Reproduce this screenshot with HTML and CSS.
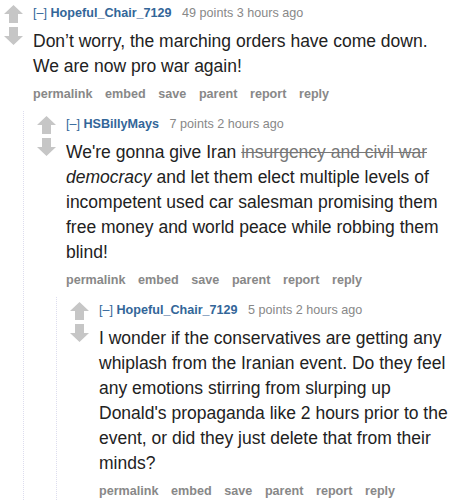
FILE: index.html
```html
<!DOCTYPE html>
<html lang="en">

<head>
  <meta charset="UTF-8">
  <meta name="viewport" content="width=device-width, initial-scale=1.0">
  <title>comments</title>
  <link rel="stylesheet" href="styles.css">
</head>

<body>

  <div class="comment">
    <div class="midcol">
      <svg class="arrows" width="19" height="48" viewBox="0 0 19 48">
        <polygon points="9.5,6 19,15 14,15 14,24 5,24 5,15 0,15" />
        <polygon points="5,28 14,28 14,37 19,37 9.5,46 0,37 5,37" />
      </svg>
    </div>
    <div class="entry">
      <p class="tagline">
        <a class="expand">[–]</a>
        <a class="author">Hopeful_Chair_7129</a>
        <span class="score">49 points</span> <span>3 hours ago</span>
      </p>
      <div class="md">
        <p>Don’t worry, the marching orders have come down. We are now pro war again!</p>
      </div>
      <ul class="buttons">
        <li>permalink</li>
        <li>embed</li>
        <li>save</li>
        <li>parent</li>
        <li>report</li>
        <li>reply</li>
      </ul>
    </div>
  </div>

  <div class="child">
    <div class="comment">
      <div class="midcol">
        <svg class="arrows" width="19" height="48" viewBox="0 0 19 48">
          <polygon points="9.5,6 19,15 14,15 14,24 5,24 5,15 0,15" />
          <polygon points="5,28 14,28 14,37 19,37 9.5,46 0,37 5,37" />
        </svg>
      </div>
      <div class="entry">
        <p class="tagline">
          <a class="expand">[–]</a>
          <a class="author">HSBillyMays</a>
          <span class="score">7 points</span> <span>2 hours ago</span>
        </p>
        <div class="md">
          <p>We're gonna give Iran <del>insurgency and civil war</del> <em>democracy</em> and let them elect multiple levels of incompetent used car salesman promising them free money and world peace while robbing them blind!</p>
        </div>
        <ul class="buttons">
          <li>permalink</li>
          <li>embed</li>
          <li>save</li>
          <li>parent</li>
          <li>report</li>
          <li>reply</li>
        </ul>
      </div>
    </div>

    <div class="child">
      <div class="comment">
        <div class="midcol">
          <svg class="arrows" width="19" height="48" viewBox="0 0 19 48">
            <polygon points="9.5,6 19,15 14,15 14,24 5,24 5,15 0,15" />
            <polygon points="5,28 14,28 14,37 19,37 9.5,46 0,37 5,37" />
          </svg>
        </div>
        <div class="entry">
          <p class="tagline">
            <a class="expand">[–]</a>
            <a class="author">Hopeful_Chair_7129</a>
            <span class="score">5 points</span> <span>2 hours ago</span>
          </p>
          <div class="md">
            <p>I wonder if the conservatives are getting any whiplash from the Iranian event. Do they feel any emotions stirring from slurping up<br>Donald's propaganda like 2 hours prior to the event, or did they just delete that from their minds?</p>
          </div>
          <ul class="buttons">
            <li>permalink</li>
            <li>embed</li>
            <li>save</li>
            <li>parent</li>
            <li>report</li>
            <li>reply</li>
          </ul>
        </div>
      </div>
    </div>
  </div>

</body>
</html>
```

FILE: styles.css
```css
body {
  font-family: 'Liberation Sans', Arial, sans-serif;
  background-color: #fff;
  color: #222;
  margin: 0;
  padding: 0;
}

.comment {
  display: flex;
  padding-left: 4px;
}

.midcol {
  width: 29px;
  flex-shrink: 0;
}

.arrows {
  display: block;
  fill: #c6c6c6;
  margin-top: -1px;
}

.entry {
  flex: 1;
  padding-right: 2px;
}

.tagline {
  margin: 4px 0 0;
  font-size: 12.6px;
  line-height: 18px;
  color: #888;
}

.tagline a {
  color: #369;
}

.author {
  font-weight: bold;
  margin-right: 7px;
}

.md {
  font-size: 17.5px;
  line-height: 25px;
}

.md p {
  margin: 7px 0 0;
}

.md del {
  color: #777;
}

.buttons {
  list-style-type: none;
  display: flex;
  gap: 12.6px;
  margin: 6px 0 0;
  padding: 0 0 8px;
  font-size: 12.6px;
  line-height: 18px;
  font-weight: bold;
  color: #888;
}

.child {
  margin-left: 23px;
  border-left: 1px dotted #dde;
  padding-left: 9px;
}
```
